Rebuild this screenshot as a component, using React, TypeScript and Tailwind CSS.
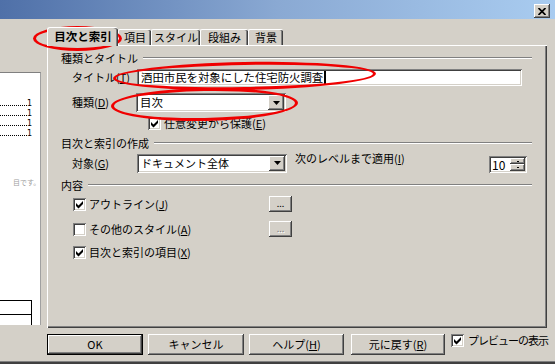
import React from "react";

const raised =
  "shadow-[inset_-1px_-1px_#404040,inset_1px_1px_#ffffff,inset_-2px_-2px_#808080,inset_2px_2px_#d4d0c8]";
const sunken =
  "shadow-[inset_1px_1px_#808080,inset_-1px_-1px_#ffffff,inset_2px_2px_#404040,inset_-2px_-2px_#d4d0c8]";

function Check({ checked = true }: { checked?: boolean }) {
  return (
    <div className={`w-[13px] h-[13px] shrink-0 bg-white ${sunken}`}>
      {checked && (
        <svg width="13" height="13" viewBox="0 0 13 13">
          <polygon points="3,5 5.5,7.5 10,3 10,6 5.5,10.5 3,8" fill="#000" />
        </svg>
      )}
    </div>
  );
}

function Group({ label }: { label: string }) {
  return (
    <div className="h-[14px] flex items-center shrink-0">
      <span className="whitespace-nowrap">{label}</span>
      <div className="flex-1 ml-[5px] h-[2px] border-t border-b border-t-[#808080] border-b-white" />
    </div>
  );
}

function DropBtn() {
  return (
    <div className={`w-[16px] h-[15px] mr-[2px] bg-[#d4d0c8] ${raised} flex items-center justify-center`}>
      <svg width="7" height="4" viewBox="0 0 7 4">
        <polygon points="0,0 7,0 3.5,4" fill="#000" />
      </svg>
    </div>
  );
}

function Btn({ className, children, def = false }: { className: string; children: React.ReactNode; def?: boolean }) {
  if (def) {
    return (
      <div className={`${className} h-[21px] border border-black bg-[#d4d0c8] flex`}>
        <div className={`flex-1 ${raised} flex items-center justify-center`}>{children}</div>
      </div>
    );
  }
  return (
    <div className={`${className} h-[21px] bg-[#d4d0c8] ${raised} flex items-center justify-center`}>
      {children}
    </div>
  );
}

function Dots({ disabled = false }: { disabled?: boolean }) {
  return (
    <div className={`w-[23px] h-[16px] bg-[#d4d0c8] ${raised} flex items-end justify-center pb-[4px]`}>
      <span
        className={`text-[9px] leading-none ${
          disabled ? "text-[#808080] [text-shadow:1px_1px_#ffffff]" : "text-black"
        }`}
      >
        ...
      </span>
    </div>
  );
}

function Leader() {
  return (
    <div className="h-[10px] flex items-end pr-[8px]">
      <div className="flex-1 mb-[3px] border-b border-dotted border-black" />
      <span className="text-[8px] leading-none w-[5px] mb-[1px] font-['DejaVu_Sans',sans-serif]">1</span>
    </div>
  );
}

export default function App() {
  return (
    <div className="relative w-[555px] h-[364px] overflow-hidden bg-[#d4d0c8] text-black text-[11px] leading-[13px] font-['Noto_Sans_CJK_JP','Noto_Sans',sans-serif] flex flex-col shadow-[inset_0_-1px_#404040,inset_0_-2px_#404040,inset_0_-3px_#808080]">
      {/* title bar */}
      <div className="h-[19px] shrink-0 bg-linear-to-r from-[#4f70a8] via-[#8aa9d3] to-[#a9ccf0] flex justify-end pt-[4px] pr-[5px]">
        <div className={`w-[16px] h-[14px] bg-[#d4d0c8] ${raised} flex items-center justify-center`}>
          <svg width="8" height="7" viewBox="0 0 8 7">
            <path d="M0.5 0 L7.5 7 M7.5 0 L0.5 7" stroke="#000" strokeWidth="1.7" />
          </svg>
        </div>
      </div>

      <div className="flex flex-1">
        {/* preview */}
        <div className="w-[47px] shrink-0 pt-[53px]">
          <div className="w-[41px] h-[253px] bg-white border-t border-r border-t-[#808080] border-r-[#a0a0a0] flex flex-col">
            <div className="pt-[26px]">
              <Leader />
              <Leader />
              <Leader />
              <Leader />
            </div>
            <div className="mt-[39px] pl-[13px] text-[7px] leading-[9px] text-[#a0a0a0] whitespace-nowrap">目です。</div>
            <div className="mt-auto w-[32px] h-[25px] border-t border-r border-black">
              <div className="h-[14px] border-b border-black" />
            </div>
          </div>
        </div>

        {/* main */}
        <div className="flex flex-col w-[508px]">
          {/* tabs */}
          <div className="h-[26px] flex items-end shrink-0">
            <div className="relative z-10 -mb-[1px] w-[71px] h-[19px] bg-[#d4d0c8] border-l border-t border-white rounded-t-[3px] shadow-[inset_-1px_0_#404040,inset_-2px_0_#808080] flex items-center justify-center font-bold text-[11.5px] pb-[1px]">
              目次と索引
            </div>
            <div className="w-[33px] h-[16px] bg-[#d4d0c8] border-l border-t border-white rounded-t-[2px] shadow-[inset_-1px_0_#404040,inset_-2px_0_#808080] flex items-center justify-center">
              項目
            </div>
            <div className="w-[49px] h-[16px] bg-[#d4d0c8] border-l border-t border-white rounded-t-[2px] shadow-[inset_-1px_0_#404040,inset_-2px_0_#808080] flex items-center justify-center">
              スタイル
            </div>
            <div className="w-[48px] h-[16px] bg-[#d4d0c8] border-l border-t border-white rounded-t-[2px] shadow-[inset_-1px_0_#404040,inset_-2px_0_#808080] flex items-center justify-center">
              段組み
            </div>
            <div className="w-[35px] h-[16px] bg-[#d4d0c8] border-l border-t border-white rounded-t-[2px] shadow-[inset_-1px_0_#404040,inset_-2px_0_#808080] flex items-center justify-center">
              背景
            </div>
          </div>

          {/* panel */}
          <div className="w-[500px] h-[283px] shrink-0 bg-[#d4d0c8] shadow-[inset_1px_1px_#ffffff,inset_-1px_-1px_#404040,inset_-2px_-2px_#808080] flex flex-col pt-[6px] pl-[14px] pr-[15px]">
            <Group label="種類とタイトル" />
            <div className="mt-[4px] h-[17px] flex items-center pl-[11px] shrink-0">
              <div className="w-[65px] whitespace-nowrap">
                タイトル(<u>T</u>)
              </div>
              <div className={`w-[385px] h-[17px] bg-white ${sunken} flex items-center pl-[4px] whitespace-nowrap text-[11.4px]`}>
                酒田市民を対象にした住宅防火調査
                <span className="inline-block w-[2px] h-[13px] bg-black ml-[1px]" />
              </div>
            </div>
            <div className="mt-[7px] h-[19px] flex items-center pl-[11px] shrink-0">
              <div className="w-[64px] whitespace-nowrap">
                種類(<u>D</u>)
              </div>
              <div className={`w-[150px] h-[19px] bg-white ${sunken} flex items-center`}>
                <span className="flex-1 pl-[4px] text-[11.4px]">目次</span>
                <DropBtn />
              </div>
            </div>
            <div className="mt-[5px] h-[13px] flex items-center shrink-0">
              <div className="ml-[87px]">
                <Check />
              </div>
              <span className="ml-[3px] whitespace-nowrap">
                任意変更から保護(<u>E</u>)
              </span>
            </div>

            <div className="mt-[6px]">
              <Group label="目次と索引の作成" />
            </div>
            <div className="mt-[3px] h-[20px] flex items-center pl-[11px] shrink-0">
              <div className="w-[65px] whitespace-nowrap">
                対象(<u>G</u>)
              </div>
              <div className={`w-[150px] h-[19px] bg-white ${sunken} flex items-center`}>
                <span className="flex-1 pl-[4px] whitespace-nowrap">ドキュメント全体</span>
                <DropBtn />
              </div>
              <div className="ml-[8px] mb-[10px] whitespace-nowrap">
                次のレベルまで適用(<u>I</u>)
              </div>
              <div className={`ml-auto mr-[5px] mt-[3px] w-[38px] h-[17px] bg-white ${sunken} flex items-center`}>
                <span className="flex-1 pl-[3px] text-[12px]">10</span>
                <div className="flex flex-col mr-[2px] gap-0">
                  <div className={`w-[15px] h-[6px] bg-[#d4d0c8] ${raised} flex items-center justify-center`}>
                    <div className="w-[2px] h-[1px] bg-black" />
                  </div>
                  <div className={`w-[15px] h-[7px] bg-[#d4d0c8] ${raised} flex items-center justify-center`}>
                    <div className="w-[2px] h-[1px] bg-black" />
                  </div>
                </div>
              </div>
            </div>

            <div className="mt-[5px]">
              <Group label="内容" />
            </div>
            <div className="mt-[4px] h-[16px] flex items-center shrink-0">
              <div className="ml-[12px]">
                <Check />
              </div>
              <span className="ml-[3px] w-[180px] whitespace-nowrap">
                アウトライン(<u>J</u>)
              </span>
              <Dots />
            </div>
            <div className="mt-[9px] h-[16px] flex items-center shrink-0">
              <div className="ml-[12px]">
                <Check checked={false} />
              </div>
              <span className="ml-[3px] w-[180px] whitespace-nowrap">
                その他のスタイル(<u>A</u>)
              </span>
              <Dots disabled />
            </div>
            <div className="mt-[7px] h-[16px] flex items-center shrink-0">
              <div className="ml-[12px]">
                <Check />
              </div>
              <span className="ml-[3px] whitespace-nowrap">
                目次と索引の項目(<u>X</u>)
              </span>
            </div>
          </div>

          {/* buttons */}
          <div className="mt-[6px] flex items-start">
            <Btn className="w-[96px]" def>
              OK
            </Btn>
            <div className="ml-[5px]">
              <Btn className="w-[96px]">キャンセル</Btn>
            </div>
            <div className="ml-[5px]">
              <Btn className="w-[95px]">
                ヘルプ(<u>H</u>)
              </Btn>
            </div>
            <div className="ml-[7px]">
              <Btn className="w-[94px]">
                元に戻す(<u>R</u>)
              </Btn>
            </div>
            <div className="ml-[6px] flex items-center h-[13px]">
              <Check />
              <span className="ml-[4px] whitespace-nowrap tracking-[-1px]">プレビューの表示</span>
            </div>
          </div>
        </div>
      </div>

      {/* red annotation ellipses */}
      <div className="pointer-events-none absolute left-[33px] top-[26px] w-[89px] h-[25px] rounded-[50%] border-[3px] border-[#f00000]" />
      <div className="pointer-events-none absolute left-[113px] top-[62px] w-[263px] h-[28px] rounded-[50%] border-[3px] border-[#f00000] rotate-[-1deg]" />
      <div className="pointer-events-none absolute left-[111px] top-[88px] w-[187px] h-[33px] rounded-[50%] border-[3px] border-[#f00000] rotate-[-1deg]" />
    </div>
  );
}
